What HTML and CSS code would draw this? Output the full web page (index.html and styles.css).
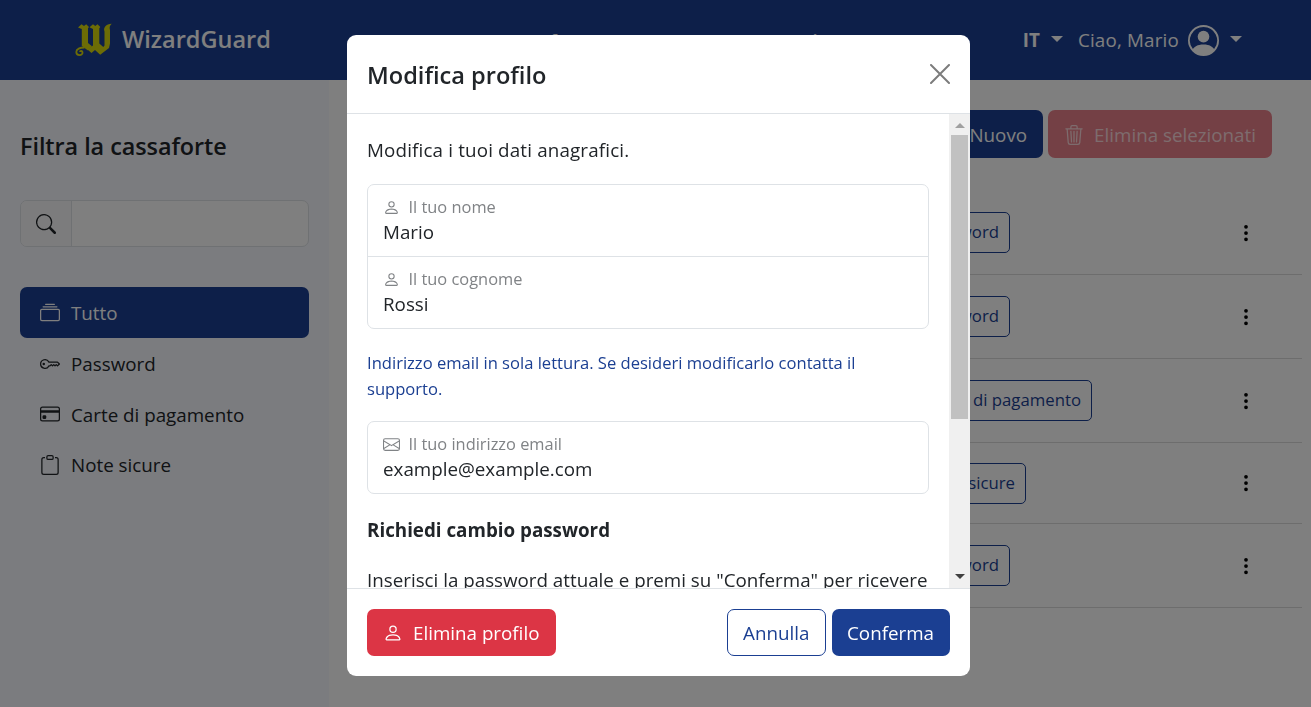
FILE: index.html
```html
<!DOCTYPE html>
<html lang="it">
<head>
<meta charset="utf-8">
<title>WizardGuard</title>
<link rel="stylesheet" href="styles.css">
</head>
<body>
<svg class="sprite" aria-hidden="true">
  <symbol id="person" viewBox="0 0 16 16"><path d="M8 8a3 3 0 1 0 0-6 3 3 0 0 0 0 6Zm2-3a2 2 0 1 1-4 0 2 2 0 0 1 4 0Zm4 8c0 1-1 1-1 1H3s-1 0-1-1 1-4 6-4 6 3 6 4Zm-1-.004c-.001-.246-.154-.986-.832-1.664C11.516 10.68 10.289 10 8 10c-2.29 0-3.516.68-4.168 1.332-.678.678-.83 1.418-.832 1.664h10Z"/></symbol>
  <symbol id="envelope" viewBox="0 0 16 16"><path d="M0 4a2 2 0 0 1 2-2h12a2 2 0 0 1 2 2v8a2 2 0 0 1-2 2H2a2 2 0 0 1-2-2V4Zm2-1a1 1 0 0 0-1 1v.217l7 4.2 7-4.2V4a1 1 0 0 0-1-1H2Zm13 2.383-4.708 2.825L15 11.105V5.383Zm-.034 6.876-5.64-3.471L8 9.583l-1.326-.795-5.64 3.47A1 1 0 0 0 2 13h12a1 1 0 0 0 .966-.741ZM1 11.105l4.708-2.897L1 5.383v5.722Z"/></symbol>
  <symbol id="search" viewBox="0 0 16 16"><path d="M11.742 10.344a6.5 6.5 0 1 0-1.397 1.398h-.001c.03.04.062.078.098.115l3.85 3.85a1 1 0 0 0 1.415-1.414l-3.85-3.85a1.007 1.007 0 0 0-.115-.1zM12 6.5a5.5 5.5 0 1 1-11 0 5.5 5.5 0 0 1 11 0z"/></symbol>
  <symbol id="collection" viewBox="0 0 16 16"><path d="M2.5 3.5a.5.5 0 0 1 0-1h11a.5.5 0 0 1 0 1h-11zm2-2a.5.5 0 0 1 0-1h7a.5.5 0 0 1 0 1h-7zM0 13a1.5 1.5 0 0 0 1.5 1.5h13A1.5 1.5 0 0 0 16 13V6a1.5 1.5 0 0 0-1.5-1.5h-13A1.5 1.5 0 0 0 0 6v7zm1.5.5A.5.5 0 0 1 1 13V6a.5.5 0 0 1 .5-.5h13a.5.5 0 0 1 .5.5v7a.5.5 0 0 1-.5.5h-13z"/></symbol>
  <symbol id="key" viewBox="0 0 16 16"><path d="M0 8a4 4 0 0 1 7.465-2H14a.5.5 0 0 1 .354.146l1.5 1.5a.5.5 0 0 1 0 .708l-1.5 1.5a.5.5 0 0 1-.708 0L13 9.207l-.646.647a.5.5 0 0 1-.708 0L11 9.207l-.646.647a.5.5 0 0 1-.708 0L9 9.207l-.646.647A.5.5 0 0 1 8 10h-.535A4 4 0 0 1 0 8zm4-3a3 3 0 1 0 2.712 4.285A.5.5 0 0 1 7.163 9h.63l.853-.854a.5.5 0 0 1 .708 0l.646.647.646-.647a.5.5 0 0 1 .708 0l.646.647.646-.647a.5.5 0 0 1 .708 0l.646.647.793-.793-1-1h-6.63a.5.5 0 0 1-.451-.285A3 3 0 0 0 4 5z"/><path d="M4 8a1 1 0 1 1-2 0 1 1 0 0 1 2 0z"/></symbol>
  <symbol id="card" viewBox="0 0 16 16"><path d="M0 4a2 2 0 0 1 2-2h12a2 2 0 0 1 2 2v8a2 2 0 0 1-2 2H2a2 2 0 0 1-2-2V4zm2-1a1 1 0 0 0-1 1v1h14V4a1 1 0 0 0-1-1H2zm13 4H1v5a1 1 0 0 0 1 1h12a1 1 0 0 0 1-1V7z"/><path d="M2 10a1 1 0 0 1 1-1h1a1 1 0 0 1 1 1v1a1 1 0 0 1-1 1H3a1 1 0 0 1-1-1v-1z"/></symbol>
  <symbol id="clipboard" viewBox="0 0 16 16"><path d="M4 1.5H3a2 2 0 0 0-2 2V14a2 2 0 0 0 2 2h10a2 2 0 0 0 2-2V3.500a2 2 0 0 0-2-2h-1v1h1a1 1 0 0 1 1 1V14a1 1 0 0 1-1 1H3a1 1 0 0 1-1-1V3.500a1 1 0 0 1 1-1h1v-1z"/><path d="M9.500 1a.5.5 0 0 1 .5.5v1a.5.5 0 0 1-.5.5h-3a.5.5 0 0 1-.5-.5v-1a.5.5 0 0 1 .5-.5h3zm-3-1A1.500 1.500 0 0 0 5 1.500v1A1.500 1.500 0 0 0 6.500 4h3A1.500 1.500 0 0 0 11 2.500v-1A1.500 1.500 0 0 0 9.500 0h-3z"/></symbol>
  <symbol id="trash" viewBox="0 0 16 16"><path d="M6.5 1h3a.5.5 0 0 1 .5.5v1H6v-1a.5.5 0 0 1 .5-.5ZM11 2.500v-1A1.500 1.500 0 0 0 9.500 0h-3A1.500 1.500 0 0 0 5 1.500v1H1.500a.5.5 0 0 0 0 1h.538l.853 10.660A2 2 0 0 0 4.885 16h6.230a2 2 0 0 0 1.994-1.840l.853-10.660h.538a.5.5 0 0 0 0-1H11Zm1.958 1-.846 10.580a1 1 0 0 1-.997.920h-6.230a1 1 0 0 1-.997-.920L3.042 3.500h9.916Zm-7.487 1a.5.5 0 0 1 .528.470l.5 8.500a.5.5 0 0 1-.998.060L5 5.030a.5.5 0 0 1 .470-.530Zm5.058 0a.5.5 0 0 1 .470.530l-.5 8.500a.5.5 0 1 1-.998-.060l.5-8.500a.5.5 0 0 1 .528-.470ZM8 4.500a.5.5 0 0 1 .5.5v8.500a.5.5 0 0 1-1 0V5a.5.5 0 0 1 .5-.5Z"/></symbol>
  <symbol id="dots" viewBox="0 0 16 16"><path d="M9.500 13a1.500 1.500 0 1 1-3 0 1.500 1.500 0 0 1 3 0zm0-5a1.500 1.500 0 1 1-3 0 1.500 1.500 0 0 1 3 0zm0-5a1.500 1.500 0 1 1-3 0 1.500 1.500 0 0 1 3 0z"/></symbol>
  <symbol id="account" viewBox="0 0 16 16"><path d="M11 6a3 3 0 1 1-6 0 3 3 0 0 1 6 0z"/><path fill-rule="evenodd" d="M0 8a8 8 0 1 1 16 0A8 8 0 0 1 0 8zm8-7a7 7 0 0 0-5.468 11.370C3.242 11.226 4.805 10 8 10s4.757 1.225 5.468 2.370A7 7 0 0 0 8 1z"/></symbol>
</svg>

<header class="navbar">
  <div class="brand">
    <svg class="logo" viewBox="0 0 37 34">
      <path d="M3 4.500 6.500 1.300 9 3l2.200-1.800L14 4l-1 1.200V20l4 3.300L13 27.500 6.800 23V6z"/>
      <path d="M14.500 4.200 18 1.300 20.300 3l2.200-1.800L25.300 4l-1 1.200V20.500l4 3.500 1.200-1.500V8.500C28 4.500 31 1 36.700.7 34.500 2.500 34.300 4.500 35 7v13.500L34 25l-8.800 6.800L20 27l-3.500 3-4-3.500 5.500-4V6z"/>
      <path class="curl" d="M9.500 24.500C5 24.500 1.300 26 1.300 29c0 4 6.700 4 6.200.2-.3-1.700-2.500-1.500-2.500-.2"/>
    </svg>
    <span>WizardGuard</span>
  </div>
  <nav class="links"><a>Cassaforte</a><a>Generatore</a><a>Contatti</a></nav>
  <div class="user">
    <b>IT</b><i class="caret"></i>
    <span class="hello">Ciao, Mario</span>
    <svg class="avatar"><use href="#account"/></svg>
    <i class="caret"></i>
  </div>
</header>

<div class="page">
  <aside class="sidebar">
    <h2>Filtra la cassaforte</h2>
    <div class="search"><span class="addon"><svg><use href="#search"/></svg></span><span class="input"></span></div>
    <ul class="filters">
      <li class="active"><svg><use href="#collection"/></svg>Tutto</li>
      <li><svg><use href="#key"/></svg>Password</li>
      <li><svg><use href="#card"/></svg>Carte di pagamento</li>
      <li><svg><use href="#clipboard"/></svg>Note sicure</li>
    </ul>
  </aside>
  <main class="vault">
    <div class="actions">
      <span class="btn primary">Nuovo</span>
      <span class="btn danger muted"><svg><use href="#trash"/></svg>Elimina selezionati</span>
    </div>
    <ul class="items">
      <li><span class="badge">Password</span><svg><use href="#dots"/></svg></li>
      <li><span class="badge">Password</span><svg><use href="#dots"/></svg></li>
      <li><span class="badge wide">Carte di pagamento</span><svg><use href="#dots"/></svg></li>
      <li class="short"><span class="badge medium">Note sicure</span><svg><use href="#dots"/></svg></li>
      <li><span class="badge">Password</span><svg><use href="#dots"/></svg></li>
    </ul>
  </main>
</div>

<div class="backdrop">
  <section class="modal">
    <div class="modal-head">
      <h1>Modifica profilo</h1>
      <svg class="close" viewBox="0 0 20 20"><path d="M1 1 19 19M19 1 1 19"/></svg>
    </div>
    <div class="modal-main">
      <div class="modal-body">
        <p class="intro">Modifica i tuoi dati anagrafici.</p>
        <div class="fields">
          <div class="field"><label><svg><use href="#person"/></svg>Il tuo nome</label><span>Mario</span></div>
          <div class="field"><label><svg><use href="#person"/></svg>Il tuo cognome</label><span>Rossi</span></div>
        </div>
        <p class="hint">Indirizzo email in sola lettura. Se desideri modificarlo contatta il supporto.</p>
        <div class="fields">
          <div class="field"><label><svg><use href="#envelope"/></svg>Il tuo indirizzo email</label><span>example@example.com</span></div>
        </div>
        <p class="subtitle">Richiedi cambio password</p>
        <p class="clipped">Inserisci la password attuale e premi su "Conferma" per ricevere</p>
      </div>
      <div class="scrollbar"><i class="up"></i><i class="thumb"></i><i class="down"></i></div>
    </div>
    <div class="modal-foot">
      <span class="btn danger">
        <svg><use href="#person"/></svg>Elimina profilo</span>
      <span class="btn outline">Annulla</span>
      <span class="btn primary">Conferma</span>
    </div>
  </section>
</div>
</body>
</html>
```
FILE: styles.css
```css
* { box-sizing: border-box; }
body {
  margin: 0;
  height: 707px;
  overflow: hidden;
  background: #fff;
  color: #212529;
  font: 400 18.8px/30px "Open Sans", "Noto Sans", sans-serif;
}
h1, h2, p, ul { margin: 0; padding: 0; }
ul { list-style: none; }
svg { display: block; flex: none; fill: currentColor; }
.sprite { display: none; }

.navbar {
  display: grid;
  grid-template-columns: 424px 1fr auto;
  align-items: center;
  height: 80px;
  padding: 0 69px 0 75px;
  background: #1b3f92;
  color: #fff;
}
.brand {
  display: flex;
  align-items: center;
  gap: 10px;
  font-size: 23.5px;
  font-weight: 600;
}
.brand span { margin-top: -2px; }
.logo { width: 37px; height: 34px; fill: #d8d80c; }
.logo .curl { fill: none; stroke: #d8d80c; stroke-width: 1.8; }
.links { display: flex; gap: 25px; padding-top: 2px; font-size: 18.4px; font-weight: 600; }
.user { display: flex; align-items: center; }
.caret {
  border: 6px solid transparent;
  border-top-color: currentColor;
  border-bottom: 0;
  margin: -2px 15px 0 11px;
}
.hello { letter-spacing: .18px; }
.avatar { width: 31px; height: 31px; margin-left: 9px; }
.avatar + .caret { margin-right: 0; }

.page { display: flex; height: 627px; }
.sidebar {
  width: 329px;
  padding: 51px 20px 0;
  background: #f7f8fe;
}
.sidebar h2 { font-size: 23.4px; font-weight: 600; letter-spacing: -.05px; }
.search {
  display: flex;
  height: 47px;
  margin-top: 39px;
  border: 1px solid #dee2e6;
  border-radius: 7px;
  background: #fff;
  overflow: hidden;
}
.addon {
  display: grid;
  place-items: center;
  width: 51px;
  border-right: 1px solid #dee2e6;
  background: #f8f9fa;
}
.addon svg { width: 20px; height: 20px; }
.filters { margin-top: 40px; }
.filters li {
  display: flex;
  align-items: center;
  gap: 11px;
  height: 50.5px;
  padding: 2px 20px 0;
}
.filters svg { width: 20px; height: 20px; margin-top: -1px; }
.filters .active { height: 51px; padding-top: 1px; border-radius: 7px; background: #1b3f92; color: #fff; }

.vault { flex: 1; padding: 30px 9px 0 20px; }
.actions {
  display: flex;
  justify-content: flex-end;
  gap: 5px;
  padding-right: 30px;
}
.btn {
  display: flex;
  align-items: center;
  height: 47px;
  padding: 0 16px;
  border-radius: 7px;
  color: #fff;
}
.btn svg { width: 20px; height: 20px; margin-right: 10px; }
.primary { background: #1b3f92; }
.danger { background: #dc3545; }
.outline { border: 1px solid #1b3f92; background: #fff; color: #1b3f92; padding: 0 15px; }
.actions .btn { height: 48px; padding-top: 1px; }
.actions .primary { width: 130px; justify-content: flex-end; }
.muted { background: #e9808a; color: #fbd9dc; }
.items { margin-top: 33px; }
.items li {
  display: flex;
  align-items: center;
  justify-content: space-between;
  height: 84px;
  padding: 0 46px 0 563px;
  border-bottom: 1px solid #dadada;
}
.items .short { height: 81px; }
.items svg { width: 20px; height: 20px; color: #000; }
.badge {
  display: flex;
  align-items: center;
  justify-content: flex-end;
  width: 98px;
  height: 41px;
  padding: 0 10px 2px 0;
  border: 1px solid #1b3f92;
  border-radius: 5px;
  color: #1b3f92;
  font-size: 16.75px;
  white-space: nowrap;
}
.badge.wide { width: 180px; }
.badge.medium { width: 114px; padding-bottom: 0; }

.backdrop {
  position: fixed;
  inset: 0;
  padding: 35px 341px 0 347px;
  background: rgba(0, 0, 0, .5);
}
.modal {
  height: 641px;
  border-radius: 9px;
  background: #fff;
  overflow: hidden;
}
.modal-head {
  display: flex;
  align-items: center;
  justify-content: space-between;
  height: 79px;
  padding: 0 20px;
  border-bottom: 1px solid #dee2e6;
}
.modal-head h1 { margin-top: 2px; font-size: 23.6px; font-weight: 600; }
.close { width: 20px; height: 20px; fill: none; stroke: #7c7c7c; stroke-width: 2; stroke-linecap: round; }
.modal-main { display: flex; height: 474px; }
.modal-body { flex: 1; padding: 21px 20px 0; overflow: hidden; }
.intro { letter-spacing: .16px; }
.fields { border: 1px solid #dee2e6; border-radius: 7px; }
.modal-body > .fields { margin-top: 19px; }
.field { height: 71px; padding: 9px 15px 0; line-height: 26px; }
.field + .field { height: 72px; border-top: 1px solid #dee2e6; }
.field label {
  display: flex;
  align-items: center;
  gap: 8.500px;
  height: 26px;
  color: #808386;
  font-size: 16.4px;
}
.field span { display: block; line-height: 25px; }
.field svg { width: 17px; height: 17px; }
.hint { margin-top: 21px; color: #1b3f92; font-size: 16.58px; line-height: 26px; }
.subtitle { margin-top: 21px; font-weight: 700; }
.clipped { margin-top: 20px; white-space: nowrap; font-size: 18.77px; }
.scrollbar {
  display: flex;
  flex-direction: column;
  align-items: center;
  width: 21px;
  background: #f0f0f0;
}
.up, .down { border: 5px solid transparent; }
.up { margin-top: 9px; border-top: 0; border-bottom-color: #a0a0a0; }
.down { margin: auto 0 9px; border-bottom: 0; border-top-color: #404040; }
.thumb { width: 17px; height: 284px; margin-top: 7px; background: #c1c1c1; }
.modal-foot {
  display: flex;
  align-items: flex-start;
  gap: 6px;
  padding: 20px 20px 0;
  border-top: 1px solid #dee2e6;
}
.modal-foot .danger { width: 189px; margin-right: auto; }
.modal-foot .outline { width: 99px; }
.modal-foot .primary { width: 118px; padding: 0 15px; }
```
